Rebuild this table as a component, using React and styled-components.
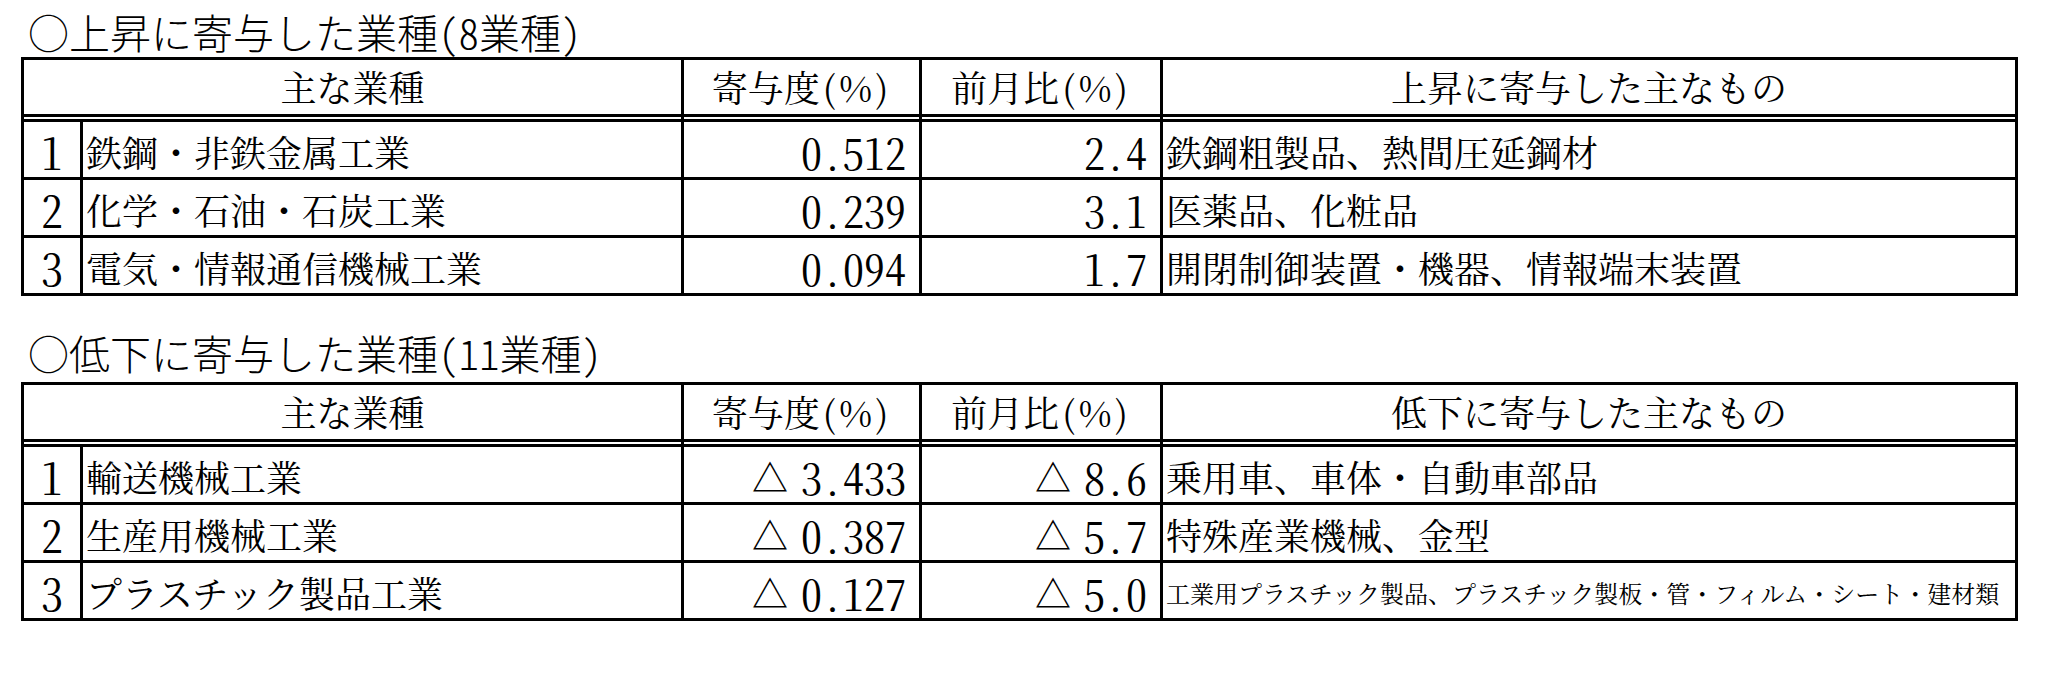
import React from "react";
import styled, { createGlobalStyle } from "styled-components";

const GlobalStyle = createGlobalStyle`
  html, body { margin: 0; padding: 0; background: #fff; }
  body { font-family: "Noto Sans CJK JP", sans-serif; color: #000; }
`;

const Page = styled.div`
  width: 2058px;
  height: 678px;
  box-sizing: border-box;
  padding: 9px 0 0 21px;
  display: flex;
  flex-direction: column;
`;

const Section = styled.section`
  display: flex;
  flex-direction: column;
  & + & { margin-top: 34px; }
`;

const Title = styled.h2`
  margin: 0 0 ${(p) => p.$gap}px 0;
  padding-left: 7px;
  height: 45px;
  font-family: "Noto Sans CJK JP", sans-serif;
  font-weight: 300;
  font-size: 41px;
  line-height: 45px;
  font-feature-settings: "hwid";
  white-space: nowrap;
`;

const Grid = styled.div`
  display: grid;
  grid-template-columns: 56px 598px 235px 238px 852px;
  grid-template-rows: 59px;
  grid-auto-rows: 55px;
  gap: 3px;
  background: #000;
  border: 3px solid #000;
  width: max-content;
`;

const serif = `"Noto Serif CJK JP", "Noto Sans CJK JP", serif`;

const HeadCell = styled.div`
  grid-column: span ${(p) => p.$span || 1};
  display: flex;
  align-items: center;
  justify-content: center;
  padding-bottom: 5px;
  background: linear-gradient(to top, #fff 0 2px, #000 2px 5px, #fff 5px 100%);
  font-family: ${serif};
  font-size: 36px;
  line-height: 40px;
  white-space: nowrap;
`;

const Paren = styled.span`
  margin: 0 3px;
`;

const Cell = styled.div`
  background: #fff;
  display: flex;
  align-items: center;
  box-sizing: border-box;
  padding-top: 4px;
  font-family: ${serif};
  font-size: 36px;
  line-height: 40px;
  white-space: nowrap;
`;

const NumCell = styled(Cell)`
  justify-content: center;
  font-size: 43px;
  font-feature-settings: "hwid";
`;

const NameCell = styled(Cell)`
  padding-left: 3px;
`;

const ValueCell = styled(Cell)`
  justify-content: flex-end;
  padding-right: 13px;
`;

const DescCell = styled(Cell)`
  padding-left: 3px;
  font-size: ${(p) => (p.$small ? "24px" : "36px")};
`;

const Digits = styled.span`
  font-size: 42px;
  font-feature-settings: "hwid";
`;

const Tri = styled.span`
  font-size: 36px;
  margin-right: 13px;
`;

const Value = ({ v }) => {
  const neg = v.startsWith("△");
  const num = neg ? v.slice(1) : v;
  return (
    <>
      {neg && <Tri>△</Tri>}
      <Digits>{num}</Digits>
    </>
  );
};

const HeadLabel = ({ text }) => (
  <>
    {text}
    <Paren>(</Paren>%<Paren>)</Paren>
  </>
);

const sections = [
  {
    title: "○上昇に寄与した業種(8業種)",
    gap: 3,
    descHead: "上昇に寄与した主なもの",
    rows: [
      ["1", "鉄鋼・非鉄金属工業", "0.512", "2.4", "鉄鋼粗製品、熱間圧延鋼材"],
      ["2", "化学・石油・石炭工業", "0.239", "3.1", "医薬品、化粧品"],
      ["3", "電気・情報通信機械工業", "0.094", "1.7", "開閉制御装置・機器、情報端末装置"],
    ],
  },
  {
    title: "○低下に寄与した業種(11業種)",
    gap: 7,
    descHead: "低下に寄与した主なもの",
    rows: [
      ["1", "輸送機械工業", "△3.433", "△8.6", "乗用車、車体・自動車部品"],
      ["2", "生産用機械工業", "△0.387", "△5.7", "特殊産業機械、金型"],
      [
        "3",
        "プラスチック製品工業",
        "△0.127",
        "△5.0",
        "工業用プラスチック製品、プラスチック製板・管・フィルム・シート・建材類",
        true,
      ],
    ],
  },
];

export default function App() {
  return (
    <>
      <GlobalStyle />
      <Page>
        {sections.map((s) => (
          <Section key={s.title}>
            <Title $gap={s.gap}>{s.title}</Title>
            <Grid>
              <HeadCell $span={2}>主な業種</HeadCell>
              <HeadCell>
                <HeadLabel text="寄与度" />
              </HeadCell>
              <HeadCell>
                <HeadLabel text="前月比" />
              </HeadCell>
              <HeadCell>{s.descHead}</HeadCell>
              {s.rows.map(([n, name, a, b, desc, small]) => (
                <React.Fragment key={n}>
                  <NumCell>{n}</NumCell>
                  <NameCell>{name}</NameCell>
                  <ValueCell>
                    <Value v={a} />
                  </ValueCell>
                  <ValueCell>
                    <Value v={b} />
                  </ValueCell>
                  <DescCell $small={small}>{desc}</DescCell>
                </React.Fragment>
              ))}
            </Grid>
          </Section>
        ))}
      </Page>
    </>
  );
}
